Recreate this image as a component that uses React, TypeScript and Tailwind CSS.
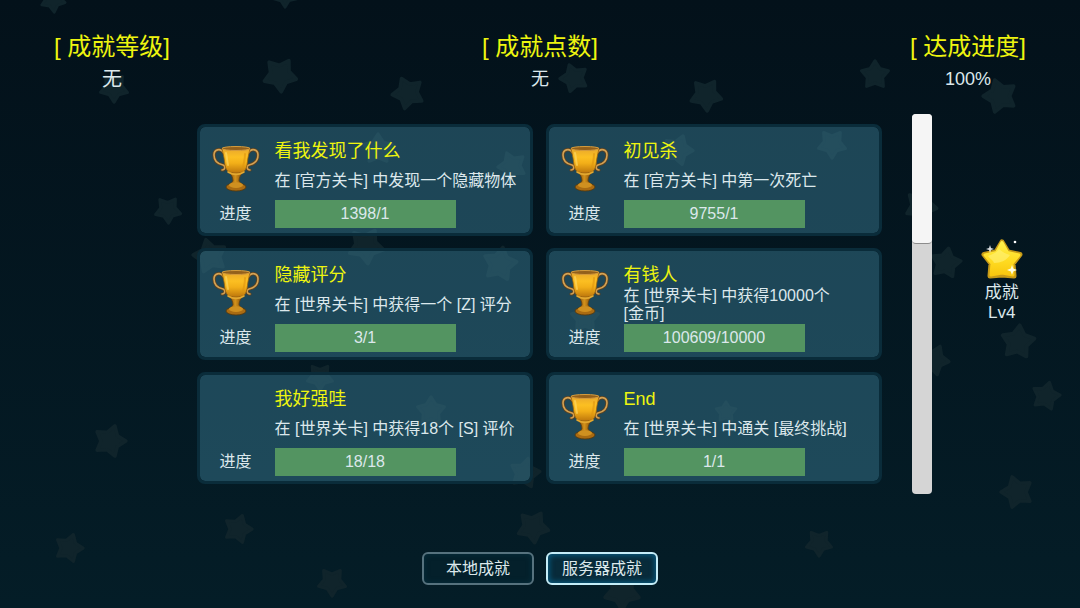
import { useState } from 'react';

interface Achievement {
  title: string;
  description: string;
  progress: string;
  hasTrophy: boolean;
}

const achievements: Achievement[] = [
  { title: '看我发现了什么', description: '在 [官方关卡] 中发现一个隐藏物体', progress: '1398/1', hasTrophy: true },
  { title: '初见杀', description: '在 [官方关卡] 中第一次死亡', progress: '9755/1', hasTrophy: true },
  { title: '隐藏评分', description: '在 [世界关卡] 中获得一个 [Z] 评分', progress: '3/1', hasTrophy: true },
  { title: '有钱人', description: '在 [世界关卡] 中获得10000个 [金币]', progress: '100609/10000', hasTrophy: true },
  { title: '我好强哇', description: '在 [世界关卡] 中获得18个 [S] 评价', progress: '18/18', hasTrophy: false },
  { title: 'End', description: '在 [世界关卡] 中通关 [最终挑战]', progress: '1/1', hasTrophy: true },
];

// x, y, radius, rotation
const stars = [
  [53, 0, 14, 30], [285, -5, 14, 36], [280, 75, 19, 32], [114, 88, 16, 36], [168, 210, 15, 34],
  [408, 93, 18, -24], [574, 78, 16, -20], [706, 95, 18, 32], [875, 75, 16, 0], [1000, 96, 19, -18],
  [832, 144, 16, 36], [921, 206, 18, 26], [946, 263, 17, 10], [1018, 342, 19, 6], [934, 360, 17, 24],
  [1046, 396, 16, 14], [1017, 492, 18, -18], [819, 543, 15, 36], [622, 592, 20, 36], [533, 527, 18, 30],
  [332, 582, 16, 36], [238, 529, 16, 18], [69, 548, 16, 18], [110, 441, 18, 18], [210, 256, 19, -14],
  [366, 246, 20, 30], [378, 149, 17, 0], [512, 166, 16, -22], [500, 264, 19, 10], [320, 377, 15, 36],
  [431, 411, 16, 0], [525, 473, 17, 12], [678, 150, 17, 20], [726, 412, 12, 0], [585, 318, 16, 0],
];

const BackgroundStars = () => (
  <svg
    className="pointer-events-none absolute inset-0 h-full w-full"
    viewBox="0 0 1080 608"
    preserveAspectRatio="xMidYMid slice"
    aria-hidden="true"
  >
    {stars.map(([x, y, r, angle]) => (
      <path
        key={`${x}-${y}`}
        d="M0-88 30-41 84-27 48 16 52 71 0 51-52 71-48 16-84-27-30-41Z"
        transform={`translate(${x} ${y}) rotate(${angle}) scale(${r / 100})`}
        fill="#10242b"
        stroke="#10242b"
        strokeWidth="20"
        strokeLinejoin="round"
      />
    ))}
  </svg>
);

const Trophy = () => (
  <svg className="h-12 w-12" viewBox="0 0 48 48" aria-hidden="true">
    <defs>
      <linearGradient id="cup" x1="0" y1="0" x2="0" y2="1">
        <stop offset="0" stopColor="#e8a82c" />
        <stop offset="0.35" stopColor="#fcbf22" />
        <stop offset="0.6" stopColor="#f2af18" />
        <stop offset="1" stopColor="#bd760c" />
      </linearGradient>
      <linearGradient id="stem" x1="0" y1="0" x2="1" y2="0">
        <stop offset="0" stopColor="#7d4b0a" />
        <stop offset="0.45" stopColor="#d4921b" />
        <stop offset="1" stopColor="#7a4708" />
      </linearGradient>
    </defs>
    <g fill="none" strokeLinecap="round">
      <path d="M12 8C8 2 2 5 2 10c0 6 4 9 9 10 3 1 2 5-1 5" stroke="#5d4220" strokeWidth="3.200" />
      <path d="M36 8c4-6 10-3 10 2 0 6-4 9-9 10-3 1-2 5 1 5" stroke="#5d4220" strokeWidth="3.200" />
      <path d="M12 8C8 2 2 5 2 10c0 6 4 9 9 10 3 1 2 5-1 5" stroke="#d3a254" strokeWidth="1.600" />
      <path d="M36 8c4-6 10-3 10 2 0 6-4 9-9 10-3 1-2 5 1 5" stroke="#d3a254" strokeWidth="1.600" />
    </g>
    <path d="M17 26c3 5 4 7 4 10l-4 5h14l-4-5c0-3 1-5 4-10Z" fill="url(#stem)" stroke="#6b410d" strokeWidth="0.8" />
    <ellipse cx="24" cy="42" rx="10" ry="4" fill="#a96b12" stroke="#573709" strokeWidth="0.8" />
    <ellipse cx="24" cy="40" rx="7" ry="3" fill="#cf9020" />
    <path
      d="M10 3.500c1 5 2 8 2.500 13 .5 5 1.500 8 3.500 10 4 2 12 2 16 0 2-2 3-5 3.500-10 .5-5 1.500-8 2.500-13Z"
      fill="url(#cup)"
      stroke="#94600f"
      strokeWidth="0.8"
    />
    <path d="M14 8c1 4 1 8 2 12" fill="none" stroke="#ffdc6a" strokeWidth="2" strokeLinecap="round" opacity="0.6" />
    <path d="M33 9c0 5-1 9-2 13" fill="none" stroke="#dd950f" strokeWidth="2" strokeLinecap="round" opacity="0.6" />
    <ellipse cx="24" cy="3.500" rx="14" ry="2" fill="#93601b" stroke="#d69c3d" strokeWidth="1" />
    <path d="M16 27c5 3 11 3 16 0" fill="none" stroke="#e3a830" strokeWidth="1.600" strokeLinecap="round" />
  </svg>
);

const LevelStar = () => (
  <svg className="h-11 w-11" viewBox="0 0 44 44" aria-hidden="true">
    <defs>
      <linearGradient id="gold" x1="0" y1="0" x2="0" y2="1">
        <stop offset="0" stopColor="#fff04a" />
        <stop offset="0.55" stopColor="#ffdc22" />
        <stop offset="1" stopColor="#f9c70f" />
      </linearGradient>
    </defs>
    <path
      d="M22 5 28 15 40 17.500 33 26.500 34 39 22 38 10 39 11 26.500 4 17.500 16 15Z"
      fill="#c79a17"
      stroke="#c79a17"
      strokeWidth="5"
      strokeLinejoin="round"
    />
    <path
      d="M22 5.500 27.500 15.500 39 18 32 26.500 33 38 22 36 11 38 12 26.500 5 18 16.500 15.500Z"
      fill="url(#gold)"
      stroke="url(#gold)"
      strokeWidth="3"
      strokeLinejoin="round"
    />
    <path d="M19 12c-2 4-7 5-11 7 2 3 5 4 6 7 7 0 13-3 16-8-4-1-8-3-11-6Z" fill="#fff27a" opacity="0.6" />
    <path d="M10 8 11 11 14 12 11 13 10 16 9 13 6 12 9 11Z" fill="#fff" opacity="0.85" />
    <path d="M32 28 33.200 31.500 37 33 33.200 34.500 32 38 30.800 34.500 27 33 30.800 31.500Z" fill="#fffde0" />
    <circle cx="35" cy="5" r="1.300" fill="#fff" />
  </svg>
);

const Stat = ({ label, value, valueClass }: { label: string; value: string; valueClass: string }) => (
  <div className="flex flex-col items-center gap-1">
    <h2 className="text-2xl leading-7 whitespace-nowrap text-[#eef50f]">[ {label}]</h2>
    <p className={`leading-7 ${valueClass}`}>{value}</p>
  </div>
);

const AchievementCard = ({ title, description, progress, hasTrophy }: Achievement) => (
  <article className="flex gap-[3px] rounded-lg border-3 border-[#0a2c3a] bg-[#387890]/50 bg-clip-padding">
    <div className="flex w-[72px] shrink-0 flex-col items-center pt-[18px]">
      <div className="h-12 w-12">{hasTrophy && <Trophy />}</div>
      <span id={`progress-${title}`} className="mt-[7px] leading-7">进度</span>
    </div>
    <div className="flex min-w-0 flex-1 flex-col pt-3 pr-2 pb-[5px]">
      <h3 className="text-lg leading-6 text-[#eef50f]">{title}</h3>
      <p className="flex h-9 items-center leading-[18px] break-keep">{description}</p>
      <div
        role="progressbar"
        aria-labelledby={`progress-${title}`}
        aria-valuenow={100}
        aria-valuetext={progress}
        className="mt-px w-[181px] bg-[#539461] text-center leading-7"
      >
        {progress}
      </div>
    </div>
  </article>
);

const App = () => {
  const [tab, setTab] = useState<'local' | 'server'>('server');

  const tabClass = (active: boolean) =>
    active
      ? 'h-[33px] w-28 rounded-md border-2 border-[#c4edf8] bg-[#082b3a] shadow-[inset_0_0_5px_2px_#075477]'
      : 'h-[33px] w-28 rounded-md border-2 border-[#56727e] bg-[#04202b] shadow-[inset_0_0_5px_1px_#062c3a]';

  return (
    <div className="relative min-h-screen overflow-hidden bg-linear-to-b from-[#03111a] to-[#041d27] font-['Liberation_Sans','Noto_Sans_CJK_SC',sans-serif] text-base text-[#dce8ec]">
      <BackgroundStars />
      <div className="relative flex flex-col">
        <header className="flex justify-between px-[54px] pt-[33px]">
          <Stat label="成就等级" value="无" valueClass="text-xl" />
          <Stat label="成就点数" value="无" valueClass="text-lg" />
          <Stat label="达成进度" value="100%" valueClass="text-lg" />
        </header>

        <main className="mt-[21px] grid grid-cols-[1fr_minmax(0,685px)_1fr] pr-0.5">
          <section className="col-start-2 grid grid-cols-2 gap-x-[13px] gap-y-3 py-[10px]">
            {achievements.map((item) => (
              <AchievementCard key={item.title} {...item} />
            ))}
          </section>

          <aside className="flex pl-[30px]">
            <div className="w-5 rounded bg-[#d5d5d5]">
              <div className="h-[130px] rounded border-b border-[#8c8c8c] bg-[#f5f5f5]" />
            </div>
            <div className="flex flex-1 flex-col items-center pt-[123px] pr-1.5 text-[17px] leading-5">
              <LevelStar />
              <span className="mt-0.5">成就</span>
              <span>Lv4</span>
            </div>
          </aside>
        </main>

        <footer className="mt-[58px] mb-5 flex justify-center gap-3">
          <button type="button" className={tabClass(tab === 'local')} onClick={() => setTab('local')}>
            本地成就
          </button>
          <button type="button" className={tabClass(tab === 'server')} onClick={() => setTab('server')}>
            服务器成就
          </button>
        </footer>
      </div>
    </div>
  );
};

export default App;
